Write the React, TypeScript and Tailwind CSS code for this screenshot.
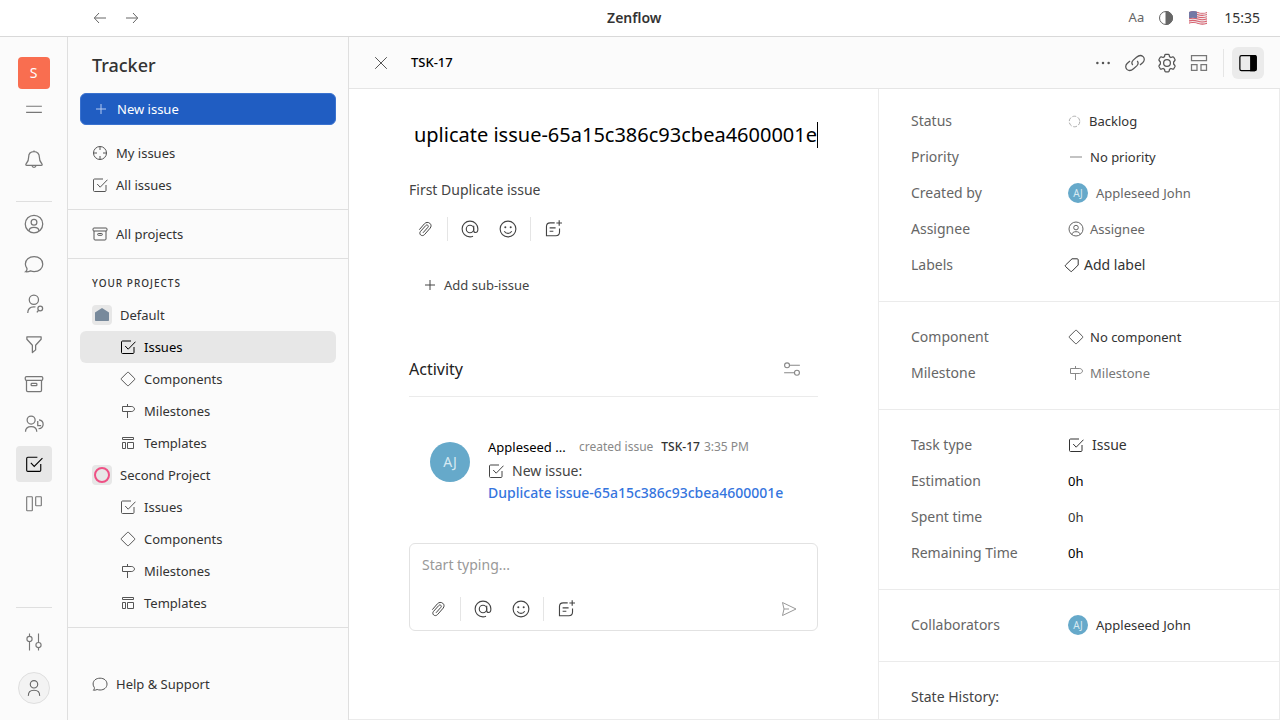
import type { ReactNode } from "react";

type IconProps = { className?: string };

function Svg({ className = "", width = 1, children }: IconProps & { width?: number; children: ReactNode }) {
  return (
    <svg
      viewBox="0 0 16 16"
      fill="none"
      stroke="currentColor"
      strokeWidth={width}
      className={`shrink-0 ${className}`}
      aria-hidden="true"
    >
      {children}
    </svg>
  );
}

const ArrowLeft = ({ className }: IconProps) => (
  <Svg className={className}>
    <path d="M14 8H2.5M7 3 2.3 8 7 13" />
  </Svg>
);
const ArrowRight = ({ className }: IconProps) => (
  <Svg className={className}>
    <path d="M2 8h11.5M9 3l4.7 5L9 13" />
  </Svg>
);
const Contrast = ({ className }: IconProps) => (
  <Svg className={className}>
    <circle cx="8" cy="8" r="6.5" />
    <path d="M8 1.5a6.5 6.5 0 0 1 0 13z" fill="currentColor" />
  </Svg>
);
const Menu = ({ className }: IconProps) => (
  <Svg className={className}>
    <path d="M1 5.5h14M1 11h14" />
  </Svg>
);
const Bell = ({ className }: IconProps) => (
  <Svg className={className}>
    <path d="M8 1.2v1M8 2.1C5.2 2.1 3.7 4 3.7 6.6c0 3.2-1.1 4-1.9 5-.6.8-.4 1.5.4 1.5h11.6c.8 0 1-.7.4-1.5-.8-1-1.9-1.8-1.9-5C12.300 4 10.800 2.100 8 2.100zM6.300 13.200c.2 1 .8 1.500 1.700 1.500s1.500-.5 1.700-1.500" />
  </Svg>
);
const UserCircle = ({ className }: IconProps) => (
  <Svg className={className}>
    <circle cx="8" cy="8" r="7" />
    <circle cx="8" cy="6.600" r="2.300" />
    <path d="M4 13.600c.1-2 1.500-2.900 4-2.900s3.900.9 4 2.900" />
  </Svg>
);
const Chat = ({ className }: IconProps) => (
  <Svg className={className}>
    <path d="M1.300 14.200c1-.8 1.300-1.700 1-2.800C1.500 10.400 1.100 9.300 1.100 8 1.100 4.500 4 2.200 8.100 2.200s6.900 2.500 6.900 5.900-2.800 5.900-6.900 5.900c-1 0-2-.2-2.900-.5-1.200.6-2.500.8-3.900.7z" />
  </Svg>
);
const Contact = ({ className }: IconProps) => (
  <Svg className={className}>
    <circle cx="7.900" cy="4.600" r="3.700" />
    <path d="M3 15.200c0-3.600 1.700-5 4.900-5 .5 0 .9 0 1.300.2" />
    <circle cx="13" cy="11.500" r="1.900" />
    <path d="m11.700 13-1.400 1.700" />
  </Svg>
);
const Funnel = ({ className }: IconProps) => (
  <Svg className={className}>
    <path d="M2.300 2.200h11.400v2L9.300 9v3.700L6.700 14.800V9L2.300 4.200z" strokeLinejoin="round" />
  </Svg>
);
const Archive = ({ className }: IconProps) => (
  <Svg className={className}>
    <rect x="1" y="2" width="14" height="3" rx="1" />
    <path d="M2 5v8c0 .7.400 1 1 1h10c.6 0 1-.3 1-1V5" />
    <rect x="5.700" y="7.500" width="4.600" height="1.800" rx=".6" />
  </Svg>
);
const Team = ({ className }: IconProps) => (
  <Svg className={className}>
    <circle cx="5.700" cy="4.800" r="3.200" />
    <path d="M1.200 14.200c0-3 1.600-4.200 4.500-4.200s4.500 1.200 4.500 4.200M11 5.500v3.700h2.700M12 4.700c2.100.3 3.300 1.600 3.300 3.400 0 2-1.300 3.400-3.700 3.700" />
  </Svg>
);
const Check = ({ className }: IconProps) => (
  <Svg className={className}>
    <path d="M11 2H2.500c-.6 0-1 .4-1 1v10.500c0 .6.400 1 1 1H13c.6 0 1-.4 1-1V8M5.200 7l3 3.200 7.300-7.500" />
  </Svg>
);
const Board = ({ className }: IconProps) => (
  <Svg className={className}>
    <rect x="1.500" y="1.500" width="5" height="12.500" rx=".5" />
    <rect x="9.500" y="1.500" width="5" height="8" rx=".5" />
  </Svg>
);
const Sliders = ({ className }: IconProps) => (
  <Svg className={className}>
    <circle cx="4" cy="5.300" r="2.300" />
    <circle cx="12" cy="10.700" r="2.300" />
    <path d="M4 .5V3M4 7.600v7.900M12 .5v7.900M12 13v2.500" />
  </Svg>
);
const Person = ({ className }: IconProps) => (
  <Svg className={className}>
    <circle cx="8" cy="4.700" r="3.300" />
    <path d="M3 15c-.1-3.300 1.400-5 5-5s5.100 1.700 5 5" />
  </Svg>
);
const Plus = ({ className }: IconProps) => (
  <Svg className={className}>
    <path d="M8 3v10M3 8h10" />
  </Svg>
);
const Target = ({ className }: IconProps) => (
  <Svg className={className}>
    <circle cx="8" cy="8" r="6.500" />
    <path d="M8 1.500V5M8 11v3.500M1.500 8H5M11 8h3.500" />
  </Svg>
);
const Diamond = ({ className }: IconProps) => (
  <Svg className={className}>
    <path d="M7.300 1.500a1 1 0 0 1 1.400 0l5.800 5.800a1 1 0 0 1 0 1.400l-5.800 5.800a1 1 0 0 1-1.400 0L1.500 8.700a1 1 0 0 1 0-1.400z" />
  </Svg>
);
const Signpost = ({ className }: IconProps) => (
  <Svg className={className}>
    <path d="M7.500 1v2M7.500 9v6M2.500 3.500h9.300c1.200 0 2.700 1.300 2.700 2.500s-1.500 2.500-2.700 2.500H2.500z" />
  </Svg>
);
const Template = ({ className }: IconProps) => (
  <Svg className={className}>
    <path d="M2.500 2.500h11v2h-11zM2.500 7.500h3v6h-3zM7.500 7.500h6v6h-6z" />
  </Svg>
);
const Close = ({ className }: IconProps) => (
  <Svg className={className}>
    <path d="m2.200 2.200 11.600 11.600M13.800 2.200 2.200 13.800" />
  </Svg>
);
const Dots = ({ className }: IconProps) => (
  <Svg className={className}>
    <g fill="currentColor" stroke="none">
      <circle cx="3.500" cy="8" r="1" />
      <circle cx="8" cy="8" r="1" />
      <circle cx="12.500" cy="8" r="1" />
    </g>
  </Svg>
);
const Link = ({ className }: IconProps) => (
  <Svg className={className}>
    <path d="M6.200 9.600C5.200 8.400 5.400 6.900 6.600 5.700l2.600-2.300c1.700-1.500 4-1.600 5.300-.5 1.300 1.200 1.200 3.300-.2 4.700L12 9.600M9.800 6.400c1 1.200.8 2.700-.4 3.900l-2.600 2.300c-1.700 1.500-4 1.600-5.300.5-1.300-1.200-1.200-3.300.2-4.700L4 6.400" />
  </Svg>
);
const Gear = ({ className }: IconProps) => (
  <Svg className={className}>
    <path
      d="M6.900 1h2.200q.5 0 .6.500l.3 1.400 1.100.7 1.500-.5q.5-.1.8.3l1 1.800q.2.400-.1.800l-1 1.200v1.600l1 1.200q.3.400.1.800l-1 1.800q-.3.400-.8.300l-1.500-.5-1.100.7-.3 1.400q-.1.500-.6.500H6.900q-.5 0-.6-.5L6 13.100l-1.100-.7-1.500.5q-.5.100-.8-.3l-1-1.800q-.2-.4.1-.8l1-1.200V7.200L1.700 6q-.3-.4-.1-.8l1-1.800q.3-.4.8-.3l1.500.5L6 2.900l.3-1.400q.1-.5.6-.5z"
      strokeLinejoin="round"
    />
    <circle cx="8" cy="8" r="2.700" />
  </Svg>
);
const Blocks = ({ className }: IconProps) => (
  <Svg className={className}>
    <path d="M2 2h12v4H2zM2 9.200h4.400v4.600H2zM9.600 9.200H14v4.600H9.600z" />
  </Svg>
);
const PanelRight = ({ className }: IconProps) => (
  <Svg className={className}>
    <rect x="1.500" y="2" width="13" height="12" rx="1.300" />
    <path d="M10.200 2h3.300a1 1 0 0 1 1 1v10a1 1 0 0 1-1 1h-3.300z" fill="currentColor" />
  </Svg>
);
const Clip = ({ className }: IconProps) => (
  <Svg className={className}>
    <path d="m2.300 8.700 5.200-6C9 1.200 11.100 1 12.700 2.200c1.700 1.300 1.700 3.300.5 4.900l-5.700 6.500c-1.100 1.200-2.700 1.300-3.800.4-1.100-1-1.200-2.400-.2-3.600L8.800 4.500c.6-.7 1.500-.7 2-.2.6.5.700 1.300.1 2L6 11.800" />
  </Svg>
);
const At = ({ className }: IconProps) => (
  <Svg className={className}>
    <circle cx="8" cy="8" r="3.300" />
    <path d="M11.300 5v4.300c0 1.200.7 1.800 1.700 1.800 1.200 0 2-1.200 2-3.100A7 7 0 1 0 8 15c1 0 1.900-.2 2.700-.5" />
  </Svg>
);
const Smile = ({ className }: IconProps) => (
  <Svg className={className}>
    <circle cx="8" cy="8" r="7" />
    <path d="M4.700 10c.7 1.200 1.900 1.900 3.300 1.900s2.600-.7 3.300-1.900" />
    <circle cx="5.600" cy="6.500" r=".9" fill="currentColor" stroke="none" />
    <circle cx="10.400" cy="6.500" r=".9" fill="currentColor" stroke="none" />
  </Svg>
);
const NotePlus = ({ className }: IconProps) => (
  <Svg className={className}>
    <path d="M9.500 2.500H5.500c-2 0-3.300 1.300-3.300 3.300v8.200h8.300c2 0 3.300-1.300 3.300-3.300V7.500M5 7h5.300M5 10h3.300M13.500.2v5M11 2.700h5" />
  </Svg>
);
const Filters = ({ className }: IconProps) => (
  <Svg className={className}>
    <circle cx="3.600" cy="4.700" r="2.200" />
    <circle cx="12.400" cy="11.300" r="2.200" />
    <path d="M5.800 4.700H15M1 11.300h9.200" />
  </Svg>
);
const Send = ({ className }: IconProps) => (
  <Svg className={className}>
    <path d="M1.500 1.500 15 8 1.500 14.500 3 8zM3 8h5" strokeLinejoin="round" />
  </Svg>
);
const Backlog = ({ className }: IconProps) => (
  <Svg className={className}>
    <circle cx="8" cy="8" r="6.500" strokeDasharray="4.800 2" />
  </Svg>
);
const Dash = ({ className }: IconProps) => (
  <Svg className={className} width={1.400}>
    <path d="M2 8h12" />
  </Svg>
);
const Tag = ({ className }: IconProps) => (
  <Svg className={className}>
    <path d="M8 1.800h5.200c.6 0 1 .4 1 1V8L8 14.200a1 1 0 0 1-1.400 0L1.500 9.500a1 1 0 0 1 0-1.400z" />
  </Svg>
);
const Home = () => (
  <svg viewBox="0 0 16 16" className="size-4 text-[#77899b]" fill="currentColor" aria-hidden="true">
    <path d="M8 1 15 5.500v7.700c0 .5-.3.800-.8.800H1.800c-.5 0-.8-.3-.8-.8V5.500z" />
  </svg>
);
const Ring = () => (
  <svg viewBox="0 0 16 16" className="size-4 text-[#ee5185]" fill="none" stroke="currentColor" strokeWidth="2" aria-hidden="true">
    <circle cx="8" cy="8" r="7" />
  </svg>
);
const Flag = () => (
  <svg viewBox="0 0 20 16" className="h-4 w-5" aria-hidden="true">
    <clipPath id="flag">
      <path d="M1 2c3-1.400 6-1.100 9 0s6 1.200 9 0v12c-3 1.300-6 1.100-9 0s-6-1.400-9 0z" />
    </clipPath>
    <g clipPath="url(#flag)">
      <path fill="#f0e8ea" d="M0 0h20v16H0z" />
      <path
        d="M0 2.500c4-1.800 7-1 10 0s6 1 10-.5M0 4.700c4-1.800 7-1 10 0s6 1 10-.5M0 6.900c4-1.800 7-1 10 0s6 1 10-.5M0 9.100c4-1.800 7-1 10 0s6 1 10-.5M0 11.300c4-1.800 7-1 10 0s6 1 10-.5M0 13.500c4-1.800 7-1 10 0s6 1 10-.5M0 15.700c4-1.800 7-1 10 0s6 1 10-.5"
        fill="none"
        stroke="#d8616f"
        strokeWidth="1.100"
      />
      <path fill="#7378a5" d="M0 0h9v8.300C6 7.400 3 7.500 0 8.500z" />
    </g>
  </svg>
);

type IconType = (props: IconProps) => ReactNode;

const railItems: { label: string; icon: IconType; size: string }[] = [
  { label: "Contacts", icon: UserCircle, size: "size-5" },
  { label: "Chat", icon: Chat, size: "size-5" },
  { label: "Recruiting", icon: Contact, size: "size-5" },
  { label: "Leads", icon: Funnel, size: "size-5" },
  { label: "Inventory", icon: Archive, size: "size-5" },
  { label: "Human resources", icon: Team, size: "size-5" },
  { label: "Tracker", icon: Check, size: "size-[18px]" },
  { label: "Board", icon: Board, size: "size-[18px]" },
];

const projectItems: { label: string; icon: IconType }[] = [
  { label: "Issues", icon: Check },
  { label: "Components", icon: Diamond },
  { label: "Milestones", icon: Signpost },
  { label: "Templates", icon: Template },
];

function TopBar() {
  return (
    <header className="flex h-[37px] shrink-0 items-center justify-between border-b border-[#d9d9d9] bg-white pr-5 pl-[92px]">
      <div className="flex gap-4 text-[#666]">
        <button aria-label="Back">
          <ArrowLeft className="size-4" />
        </button>
        <button aria-label="Forward">
          <ArrowRight className="size-4" />
        </button>
      </div>
      <h1 className="text-sm font-semibold text-[#333]">Zenflow</h1>
      <div className="flex items-center gap-3.5 text-[#666]">
        <button aria-label="Font size" className="text-[13px]">
          Aa
        </button>
        <button aria-label="Theme">
          <Contrast className="size-4" />
        </button>
        <button aria-label="Language">
          <Flag />
        </button>
        <time className="ml-0.5 text-sm text-[#333]">15:35</time>
      </div>
    </header>
  );
}

function Rail() {
  return (
    <nav
      aria-label="Applications"
      className="flex w-[68px] shrink-0 flex-col items-center border-r border-[#dfdfdf] bg-[#fbfbfb] pt-5 pb-4 text-[#777]"
    >
      <button className="size-8 shrink-0 rounded-sm bg-[#f96e50] text-sm text-white">S</button>
      <button aria-label="Toggle menu" className="mt-0.5 grid size-9 shrink-0 place-items-center">
        <Menu className="size-[18px]" />
      </button>
      <button aria-label="Notifications" className="mt-3.5 grid size-9 shrink-0 place-items-center">
        <Bell className="size-5" />
      </button>
      <hr className="mt-6 w-9 border-[#dfdfdf]" />
      <div className="mt-1 flex flex-col gap-1">
        {railItems.map(({ label, icon: Icon, size }) => (
          <button
            key={label}
            aria-label={label}
            className={`grid size-9 place-items-center rounded-sm ${label === "Tracker" ? "bg-[#e7e7e7] text-black" : ""}`}
          >
            <Icon className={size} />
          </button>
        ))}
      </div>
      <hr className="mt-auto w-9 border-[#dfdfdf]" />
      <button aria-label="Settings" className="mt-4 grid size-9 shrink-0 place-items-center">
        <Sliders className="size-[18px]" />
      </button>
      <button
        aria-label="Profile"
        className="mt-3 grid size-8 shrink-0 place-items-center rounded-full border border-[#dfdfdf] bg-[#f3f3f3] text-[#666]"
      >
        <Person className="size-[18px]" />
      </button>
    </nav>
  );
}

function NavLink({ label, icon: Icon, nested = false, active = false }: { label: string; icon: IconType; nested?: boolean; active?: boolean }) {
  return (
    <a
      href="#"
      className={`flex h-8 items-center gap-2 rounded-md ${nested ? "pl-10" : "pl-3"} ${active ? "bg-[#e7e7e7] text-black" : "text-[#333]"}`}
    >
      <Icon className={`size-4 ${active ? "" : "text-[#555]"}`} />
      {label}
    </a>
  );
}

function Project({ name, badge, active }: { name: string; badge: ReactNode; active?: string }) {
  return (
    <>
      <a href="#" className="flex h-8 items-center gap-2 pl-3">
        <span className="grid size-5 place-items-center rounded-sm bg-[#e7e7e7]">{badge}</span>
        {name}
      </a>
      {projectItems.map((item) => (
        <NavLink key={item.label} {...item} nested active={item.label === active} />
      ))}
    </>
  );
}

function Sidebar() {
  return (
    <nav
      aria-label="Tracker"
      className="flex w-[281px] shrink-0 flex-col border-r border-[#dfdfdf] bg-[#fbfbfb] text-[13px] leading-5 text-[#333]"
    >
      <h2 className="flex h-14 shrink-0 items-center pl-6 text-lg font-medium">Tracker</h2>
      <button className="mx-3 flex h-8 shrink-0 items-center gap-2 rounded-md border border-[#3a72cf] bg-[#205dc2] pl-3 text-white">
        <Plus className="size-4 text-[#b5cbf0]" />
        New issue
      </button>
      <div className="border-b border-[#dfdfdf] px-3 pt-3 pb-2">
        <NavLink label="My issues" icon={Target} />
        <NavLink label="All issues" icon={Check} />
      </div>
      <div className="border-b border-[#dfdfdf] px-3 py-2">
        <NavLink label="All projects" icon={Archive} />
      </div>
      <div className="border-b border-[#dfdfdf] px-3 py-2">
        <h3 className="flex h-8 items-center pl-3 text-[10px] font-medium tracking-widest uppercase">Your projects</h3>
        <Project name="Default" badge={<Home />} active="Issues" />
        <Project name="Second Project" badge={<Ring />} />
      </div>
      <div className="mt-auto px-3 pb-5">
        <NavLink label="Help & Support" icon={Chat} />
      </div>
    </nav>
  );
}

function DetailHeader() {
  return (
    <header className="flex h-[52px] shrink-0 items-center border-b border-[#e5e5e5] bg-[#fbfbfb] pr-4 pl-6 text-[#555]">
      <button aria-label="Close">
        <Close className="size-4" />
      </button>
      <span className="ml-[22px] text-[13px] font-medium text-black">TSK-17</span>
      <div className="ml-auto flex items-center gap-3">
        <button aria-label="More">
          <Dots className="size-5" />
        </button>
        <button aria-label="Copy link">
          <Link className="size-5" />
        </button>
        <button aria-label="Settings">
          <Gear className="size-5" />
        </button>
        <button aria-label="Layout">
          <Blocks className="size-5 text-[#777]" />
        </button>
      </div>
      <div className="ml-3.5 h-7 w-px bg-[#e5e5e5]" />
      <button aria-label="Toggle details" className="ml-2 grid size-8 place-items-center rounded-md bg-[#ebebeb] text-black">
        <PanelRight className="size-5" />
      </button>
    </header>
  );
}

function EditorTools() {
  return (
    <div className="flex h-6 items-center text-[#444]">
      <button aria-label="Attach file" className="grid w-8 place-items-center">
        <Clip className="size-4" />
      </button>
      <div className="mx-1.5 h-6 w-px bg-[#e5e5e5]" />
      <button aria-label="Mention" className="grid w-8 place-items-center">
        <At className="size-[18px]" />
      </button>
      <button aria-label="Emoji" className="ml-1.5 grid w-8 place-items-center">
        <Smile className="size-[18px]" />
      </button>
      <div className="mx-1.5 h-6 w-px bg-[#e5e5e5]" />
      <button aria-label="Add note" className="grid w-8 place-items-center">
        <NotePlus className="size-[18px]" />
      </button>
    </div>
  );
}

function TitleField() {
  return (
    <div className="flex h-8 items-center">
      <input
        aria-label="Title"
        defaultValue="uplicate issue-65a15c386c93cbea4600001e"
        className="min-w-0 flex-1 bg-transparent text-right text-xl leading-8 text-black caret-transparent outline-none"
      />
      <span className="h-[26px] w-px bg-black" />
    </div>
  );
}

function Detail() {
  return (
    <section className="flex min-w-0 flex-1 flex-col border-b border-[#ebebeb] px-[60px] pt-[30px]">
      <TitleField />
      <p className="mt-[27px] text-sm leading-6 text-[#444]">First Duplicate issue</p>
      <div className="mt-[15px]">
        <EditorTools />
      </div>
      <button className="mt-8 ml-3 flex h-6 items-center gap-1.5 self-start pl-px text-[13px] leading-5 text-[#444]">
        <Plus className="size-4" />
        Add sub-issue
      </button>
      <div className="mt-11 flex h-14 items-center justify-between border-b border-[#ebebeb] pr-[17px]">
        <h2 className="text-base text-[#222]">Activity</h2>
        <button aria-label="Filter activity">
          <Filters className="size-[18px] text-[#888]" />
        </button>
      </div>
      <article className="mt-[39px] flex gap-[18px] pl-[21px]">
        <span className="mt-1.5 grid size-10 shrink-0 place-items-center rounded-full bg-[#66a9ca] text-sm text-[#d6e9f2]">AJ</span>
        <div className="min-w-0 text-sm leading-[22px] text-[#444]">
          <div className="flex items-center text-xs leading-[22px] text-[#888]">
            <span className="w-[83px] text-[13px] leading-[22px] text-black">Appleseed ...</span>
            <span className="ml-2">created issue</span>
            <span className="ml-2 font-medium text-[#333]">TSK-17</span>
            <time className="ml-1">3:35 PM</time>
          </div>
          <div className="mt-0.5 flex items-center gap-2">
            <Check className="size-4" />
            New issue:
          </div>
          <a href="#" className="block font-medium text-[#3575de]">
            Duplicate issue-65a15c386c93cbea4600001e
          </a>
        </div>
      </article>
      <form className="mt-[39px] flex h-[88px] flex-col justify-between rounded-md border border-[#e2e2e2] pt-2 pr-5 pb-[9px] pl-3">
        <input
          aria-label="Comment"
          placeholder="Start typing..."
          className="h-6 bg-transparent text-sm outline-none placeholder:text-[#999]"
        />
        <div className="flex items-center justify-between">
          <EditorTools />
          <button type="button" aria-label="Send">
            <Send className="size-4 text-[#999]" />
          </button>
        </div>
      </form>
    </section>
  );
}

function Field({ label, children }: { label: string; children?: ReactNode }) {
  return (
    <div className="flex h-9 items-center">
      <dt className="w-[157px] shrink-0 text-sm text-[#666]">{label}</dt>
      <dd className="text-[13px] leading-5 text-[#333]">{children}</dd>
    </div>
  );
}

function SmallAvatar() {
  return <span className="grid size-5 place-items-center rounded-full bg-[#66a9ca] text-[10px] text-[#d6e9f2]">AJ</span>;
}

function Properties() {
  const group = "border-b border-[#ebebeb] pt-[17px] pb-[18px] pl-8";
  return (
    <aside className="w-[402px] shrink-0 overflow-hidden border-x border-b border-[#ebebeb]">
      <dl className="border-b border-[#ebebeb] pt-3.5 pb-[18px] pl-8">
        <Field label="Status">
          <button className="flex items-center gap-2">
            <Backlog className="size-[13px] text-[#999]" />
            Backlog
          </button>
        </Field>
        <Field label="Priority">
          <button className="flex items-center gap-1.5">
            <Dash className="size-4 text-[#aaa]" />
            No priority
          </button>
        </Field>
        <Field label="Created by">
          <span className="flex items-center gap-2 text-[#666]">
            <SmallAvatar />
            Appleseed John
          </span>
        </Field>
        <Field label="Assignee">
          <button className="flex items-center gap-1.5 text-[#666]">
            <UserCircle className="size-4" />
            Assignee
          </button>
        </Field>
        <Field label="Labels">
          <button className="-ml-1 flex items-center gap-1 text-sm">
            <Tag className="size-4" />
            Add label
          </button>
        </Field>
      </dl>
      <dl className={group}>
        <Field label="Component">
          <button className="flex items-center gap-1.5">
            <Diamond className="size-4 text-[#555]" />
            No component
          </button>
        </Field>
        <Field label="Milestone">
          <button className="flex items-center gap-1.5 text-[#777]">
            <Signpost className="size-4 text-[#888]" />
            Milestone
          </button>
        </Field>
      </dl>
      <dl className={group}>
        <Field label="Task type">
          <span className="flex items-center gap-2 text-sm">
            <Check className="size-4" />
            Issue
          </span>
        </Field>
        <Field label="Estimation">
          <button className="text-black">0h</button>
        </Field>
        <Field label="Spent time">0h</Field>
        <Field label="Remaining Time">
          <button className="text-black">0h</button>
        </Field>
      </dl>
      <dl className={group}>
        <Field label="Collaborators">
          <button className="flex items-center gap-2">
            <SmallAvatar />
            Appleseed John
          </button>
        </Field>
      </dl>
      <div className="pt-[17px] pl-8">
        <h3 className="flex h-9 items-center text-sm text-[#444]">State History:</h3>
      </div>
    </aside>
  );
}

export default function App() {
  return (
    <div className="flex h-screen flex-col overflow-hidden bg-white font-['Noto_Sans',sans-serif]">
      <TopBar />
      <div className="flex min-h-0 flex-1">
        <Rail />
        <Sidebar />
        <main className="flex min-w-0 flex-1 flex-col">
          <DetailHeader />
          <div className="flex min-h-0 flex-1">
            <Detail />
            <Properties />
          </div>
        </main>
      </div>
    </div>
  );
}
